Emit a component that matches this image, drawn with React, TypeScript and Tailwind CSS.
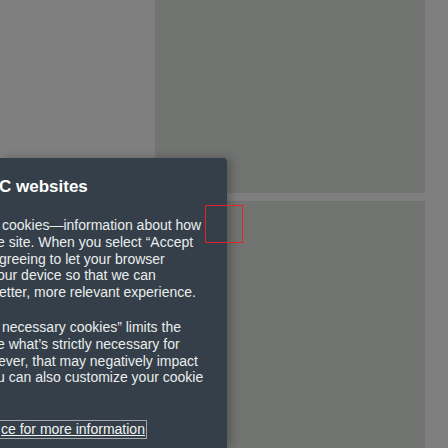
export default function App() {
  const para1 = [
    { t: 'cookies—information about how', ml: 'ml-[2px]' },
    { t: 'e site. When you select “Accept', ml: 'ml-[-3px]' },
    { t: 'greeing to let your browser', ml: 'ml-[-1px]' },
    { t: 'our device so that we can', ml: 'ml-[-3px]' },
    { t: 'etter, more relevant experience.', ml: 'ml-[-1px]' },
  ];
  const para2 = [
    { t: 'necessary cookies” limits the', ml: 'ml-[2px]' },
    { t: 'e what’s strictly necessary for', ml: 'ml-[-3px]' },
    { t: 'ever, that may negatively impact', ml: 'ml-[-2px]' },
    { t: 'u can also customize your cookie', ml: 'ml-[-3px]' },
    { t: '\u00a0', ml: '' },
  ];

  return (
    <div className="relative w-[448px] h-[448px] overflow-hidden bg-[#7f7f7f]">
      {/* page behind the overlay */}
      <div className="flex h-full">
        <div className="w-[155px]" />
        <div className="w-[270px] flex flex-col gap-[8px]">
          <div className="h-[193px] bg-[#727472]" />
          <div className="flex-1 bg-[#727472]" />
        </div>
      </div>

      {/* cookie dialog */}
      <div
        className="absolute left-0 top-[158px] bottom-0 w-[227px] overflow-hidden rounded-tr-[4px] bg-[#343f49] shadow-[4px_0_10px_rgba(0,0,0,0.25)] pt-[17px]"
        style={{ fontFamily: '"Liberation Sans", Arial, sans-serif' }}
      >
        <h2 className="ml-[-1px] text-[17px] leading-[24px] font-bold text-white whitespace-nowrap">
          C websites
        </h2>
        <div className="mt-[18px] text-[14px] leading-[16.8px] text-[#eaeded]">
          <div className="mb-[18px]">
            {para1.map((l, i) => (
              <div key={i} className={`whitespace-nowrap ${l.ml}`}>{l.t}</div>
            ))}
          </div>
          <div className="mb-[17px]">
            {para2.map((l, i) => (
              <div key={i} className={`whitespace-nowrap ${l.ml}`}>{l.t}</div>
            ))}
          </div>
          <div className="flex">
            <a className="ml-[-4px] pl-[4px] pr-[1px] border border-[#a3a7ab] underline whitespace-nowrap leading-[17px] text-[#f2f3f3]">
              ce for more information
            </a>
          </div>
        </div>
      </div>

      {/* red highlight box */}
      <div className="absolute left-[205px] top-[205px] w-[38px] h-[38px] border border-[#e3232a]" />
    </div>
  );
}
